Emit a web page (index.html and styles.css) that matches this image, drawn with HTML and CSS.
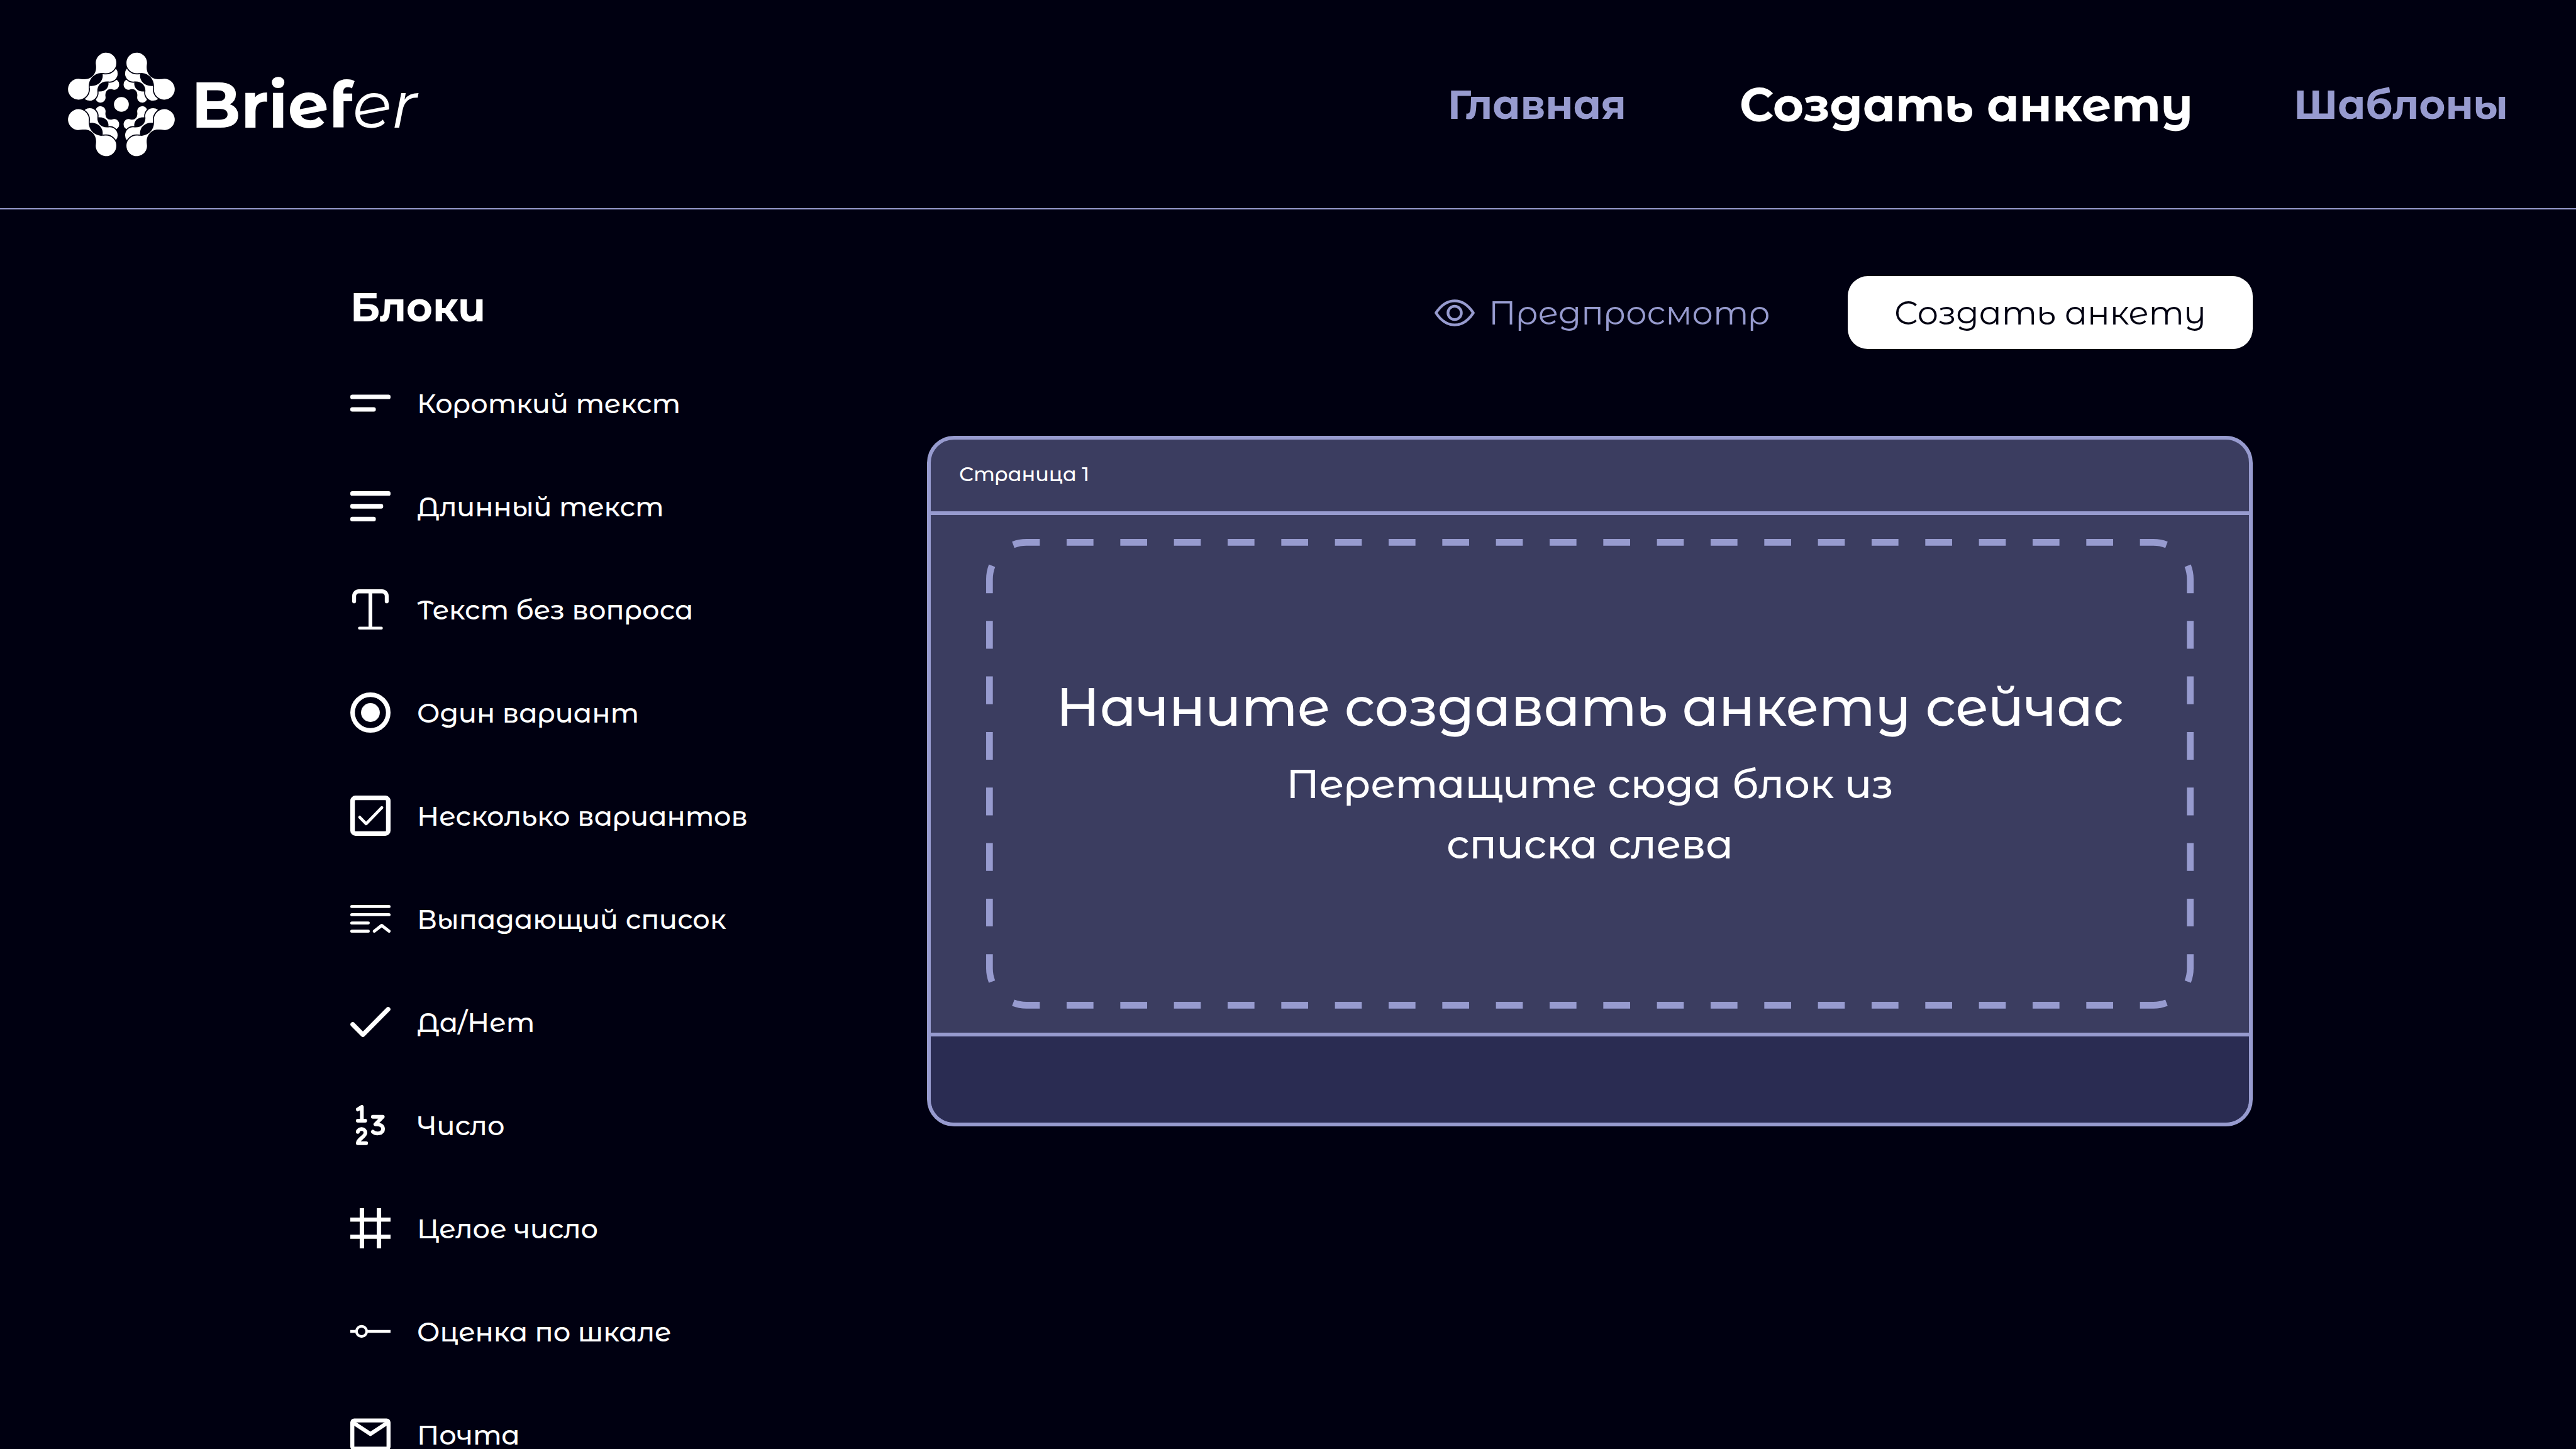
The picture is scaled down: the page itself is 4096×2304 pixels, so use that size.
FILE: index.html
```
<!DOCTYPE html>
<html lang="ru">
<head>
<meta charset="utf-8">
<meta name="viewport" content="width=device-width, initial-scale=1">
<title>Briefer</title>
<link rel="stylesheet" href="styles.css">
</head>
<body>
<header class="header">
  <a class="logo" href="#">
    <svg class="logo-mark" viewBox="38 38 718 698" aria-hidden="true">
      <defs>
        <g id="petal">
          <path d="M382 252A34 34 0 0 0 316 240L310 238C316 275 285 305 242 300L235 315A34 34 0 1 0 291 340C284 300 305 280 335 286A34 34 0 0 0 382 252Z"/>
          <path d="M372 180A53 53 0 0 0 268 165L271 183C278 228 240 270 182 262L150 270A53 53 0 0 0 184 362A53 53 0 0 0 236 300C232 262 262 228 310 233A53 53 0 0 0 372 180Z"/>
          <path d="M363 109A69 69 0 1 0 226 120C232 165 215 190 190 208C165 222 145 218 125 217A70 70 0 1 0 178 275C174 225 205 182 260 176C275 177 285 178 294 178A69 69 0 0 0 363 109Z"/>
        </g>
      </defs>
      <use href="#petal"/>
      <use href="#petal" transform="matrix(-1 0 0 1 794 0)"/>
      <use href="#petal" transform="matrix(1 0 0 -1 0 774)"/>
      <use href="#petal" transform="matrix(-1 0 0 -1 794 774)"/>
      <circle cx="397" cy="387" r="50"/>
    </svg>
    <span class="logo-text">Brief<em>er</em></span>
  </a>
  <nav class="nav">
    <a class="nav-link" href="#">Главная</a>
    <a class="nav-link nav-link-active" href="#" aria-current="page">Создать анкету</a>
    <a class="nav-link" href="#">Шаблоны</a>
  </nav>
</header>

<main class="main">
  <aside class="blocks">
    <h2 class="blocks-title">Блоки</h2>
    <ul class="blocks-list">
      <li><button class="block" type="button">
        <svg class="icon" viewBox="0 0 30 30" aria-hidden="true"><rect y="8.7" width="30" height="3.3" rx="1.5"/><rect y="18" width="19" height="3.3" rx="1.5"/></svg>
        Короткий текст</button></li>
      <li><button class="block" type="button">
        <svg class="icon" viewBox="0 0 30 30" aria-hidden="true"><rect y="3.8" width="30" height="3.4" rx="1.5"/><rect y="13.3" width="24.5" height="3.4" rx="1.5"/><rect y="22.8" width="19" height="3.4" rx="1.5"/></svg>
        Длинный текст</button></li>
      <li><button class="block" type="button">
        <svg class="icon" viewBox="0 0 30 30" aria-hidden="true"><path d="M1.4 9V5A5 5 0 0 1 6.4 0H23.6A5 5 0 0 1 28.6 5V9A1.4 1.4 0 0 1 25.7 9V5.1A2 2 0 0 0 23.7 3.1H16.4V27.9H23.2A1 1 0 0 1 23.2 30H6.8A1 1 0 0 1 6.8 27.9H13.6V3.1H6.3A2 2 0 0 0 4.3 5.1V9A1.4 1.4 0 0 1 1.4 9Z"/></svg>
        Текст без вопроса</button></li>
      <li><button class="block" type="button">
        <svg class="icon icon-line" viewBox="0 0 30 30" aria-hidden="true"><circle cx="15" cy="15" r="13.3" stroke-width="3.4"/><circle class="solid" cx="15" cy="15" r="7"/></svg>
        Один вариант</button></li>
      <li><button class="block" type="button">
        <svg class="icon icon-line" viewBox="0 0 30 30" aria-hidden="true"><rect x="1.7" y="1.7" width="26.6" height="26.6" rx="2.2" stroke-width="3.4"/><path d="M7 16.1L11.8 21L23.5 9" stroke-width="2.2"/></svg>
        Несколько вариантов</button></li>
      <li><button class="block" type="button">
        <svg class="icon icon-line" viewBox="0 0 30 30" aria-hidden="true"><path d="M1.1 5.8H28.9M1.1 11.9H28.9M1.1 18.1H13.4M1.1 24.2H13.4M17.9 24.2L23.4 19.9L28.9 24.2" stroke-width="2.3"/></svg>
        Выпадающий список</button></li>
      <li><button class="block" type="button">
        <svg class="icon icon-line" viewBox="0 0 30 30" aria-hidden="true"><path d="M1.8 16.8L9.4 24.5L28.2 5.5" stroke-width="3.4"/></svg>
        Да/Нет</button></li>
      <li><button class="block" type="button">
        <svg class="icon icon-line" viewBox="0 0 30 30" aria-hidden="true"><path d="M5.6 3.3L8.6 1.4V11.7M5.6 11.7H11.1M5.6 20.1C5.8 17.2 11.3 17 11.3 20.8C11.3 23.6 5.6 25.4 5.6 28.5H11.8M16.8 8.8H24.2L18.7 14.4C22 14.2 24.4 15.4 24.4 17.8C24.4 21.4 19.4 22.2 16.8 19.9" stroke-width="2.8"/></svg>
        Число</button></li>
      <li><button class="block" type="button">
        <svg class="icon" viewBox="0 0 30 30" aria-hidden="true"><path d="M7 0H10.3V30H7ZM19.7 0H23V30H19.7ZM0 7H30V10.1H0ZM0 19.8H30V22.9H0Z"/></svg>
        Целое число</button></li>
      <li><button class="block" type="button">
        <svg class="icon icon-line icon-butt" viewBox="0 0 30 30" aria-hidden="true"><path d="M0 15H4M12.6 15H30" stroke-width="2.1"/><circle cx="8.4" cy="15" r="3.8" stroke-width="1.9"/></svg>
        Оценка по шкале</button></li>
      <li><button class="block" type="button">
        <svg class="icon icon-line" viewBox="0 0 30 30" aria-hidden="true"><rect x="1.5" y="4.5" width="27" height="21" rx="1.5" stroke-width="3"/><path d="M2 6L15 14.6L28 6" stroke-width="3"/></svg>
        Почта</button></li>
    </ul>
  </aside>

  <section class="editor">
    <div class="toolbar">
      <button class="preview" type="button">
        <svg class="eye" viewBox="0 0 30 20" aria-hidden="true"><path d="M1.1 10C5 4 9.6 1 15 1S25 4 28.9 10C25 16 20.4 19 15 19S5 16 1.1 10Z"/><circle cx="15" cy="10" r="5"/></svg>
        Предпросмотр
      </button>
      <button class="create" type="button">Создать анкету</button>
    </div>

    <article class="page">
      <header class="page-head">Страница 1</header>
      <div class="page-body">
        <div class="drop">
          <svg class="drop-frame" viewBox="0 0 900 350" aria-hidden="true">
            <path d="M20.2 4.3A27.5 27.5 0 0 1 30 2.5H870A27.5 27.5 0 0 1 879.8 4.3" stroke-dasharray="20 20"/>
            <path d="M20.2 345.7A27.5 27.5 0 0 0 30 347.5H870A27.5 27.5 0 0 0 879.8 345.7" stroke-dasharray="20 20"/>
            <path d="M4.4 19.9A27.5 27.5 0 0 0 2.5 30V320A27.5 27.5 0 0 0 4.4 330.1" stroke-dasharray="20.7 20.7"/>
            <path d="M895.6 19.9A27.5 27.5 0 0 1 897.5 30V320A27.5 27.5 0 0 1 895.6 330.1" stroke-dasharray="20.7 20.7"/>
          </svg>
          <h1 class="drop-title">Начните создавать анкету сейчас</h1>
          <p class="drop-hint">Перетащите сюда блок из списка слева</p>
        </div>
      </div>
      <footer class="page-foot"></footer>
    </article>
  </section>
</main>
</body>
</html>
```
FILE: styles.css
```
:root {
  --bg: #000011;
  --accent: #979bcf;
  --panel: #3b3d60;
  --panel-dark: #2a2c52;
  --text: #ffffff;
}

* {
  box-sizing: border-box;
}

body {
  display: flex;
  flex-direction: column;
  height: 100vh;
  margin: 0;
  overflow: hidden;
  background: var(--bg);
  color: var(--text);
  font-family: "Montserrat Alternates", Montserrat, Inter, sans-serif;
  font-weight: 500;
}

button {
  padding: 0;
  border: 0;
  background: none;
  color: inherit;
  font: inherit;
  cursor: pointer;
}

a {
  color: inherit;
  text-decoration: none;
}

/* Header */

.header {
  display: flex;
  flex: none;
  align-items: center;
  justify-content: space-between;
  height: 333px;
  padding: 0 108px;
  border-bottom: 2px solid var(--accent);
}

.logo {
  display: flex;
  align-items: center;
  gap: 26px;
}

.logo-mark {
  width: 170px;
  height: 166px;
  fill: var(--text);
}

.logo-mark path {
  stroke: var(--bg);
  stroke-width: 14;
  paint-order: stroke;
}

.logo-text {
  font-size: 103px;
  font-weight: 700;
  line-height: 132px;
}

.logo-text em {
  font-weight: 400;
}

.nav {
  display: flex;
  align-items: center;
  gap: 160px;
}

.nav-link {
  color: var(--accent);
  font-size: 64px;
  font-weight: 700;
}

.nav-link-active {
  margin-left: 20px;
  color: var(--text);
  font-size: 75px;
}

/* Layout */

.main {
  display: grid;
  flex: 1;
  grid-template-columns: 560px minmax(0, 1fr);
  gap: 357px;
  min-height: 0;
  padding: 106px 514px 0 557px;
}

/* Block list */

.blocks-title {
  margin: 0 0 54px;
  font-size: 64px;
  font-weight: 700;
  line-height: 98px;
}

.blocks-list {
  display: flex;
  flex-direction: column;
  gap: 64px;
  margin: 0;
  padding: 0;
  list-style: none;
}

.block {
  display: flex;
  align-items: center;
  gap: 42px;
  height: 100px;
  font-size: 43px;
  white-space: nowrap;
}

.icon {
  flex: none;
  width: 64px;
  height: 64px;
  fill: var(--text);
}

.icon-line {
  fill: none;
  stroke: var(--text);
  stroke-linecap: round;
  stroke-linejoin: round;
}

.icon-line .solid {
  fill: var(--text);
  stroke: none;
}

.icon-butt {
  stroke-linecap: butt;
}

/* Toolbar */

.toolbar {
  display: flex;
  align-items: center;
  justify-content: flex-end;
  gap: 123px;
  margin-bottom: 138px;
}

.preview {
  display: flex;
  align-items: center;
  gap: 22px;
  color: var(--accent);
  font-size: 53px;
  font-weight: 400;
}

.eye {
  width: 64px;
  height: 43px;
  fill: none;
  stroke: var(--accent);
  stroke-width: 2;
  stroke-linejoin: round;
}

.create {
  height: 116px;
  padding: 0 74px;
  border-radius: 32px;
  background: var(--text);
  color: var(--bg);
  font-size: 53px;
  font-weight: 400;
}

/* Survey page */

.page {
  overflow: hidden;
  border: 6px solid var(--accent);
  border-radius: 43px;
  background: var(--panel);
}

.page-head {
  padding: 30px 45px 34px;
  border-bottom: 6px solid var(--accent);
  font-size: 32px;
  line-height: 50px;
}

.page-body {
  padding: 38px 88px;
}

.page-foot {
  height: 143px;
  border-top: 6px solid var(--accent);
  background: var(--panel-dark);
}

.drop {
  position: relative;
  display: flex;
  flex-direction: column;
  align-items: center;
  justify-content: center;
  gap: 10px;
  aspect-ratio: 900 / 350;
  padding-bottom: 10px;
  text-align: center;
}

.drop-frame {
  position: absolute;
  inset: 0;
  width: 100%;
  height: 100%;
  fill: none;
  stroke: var(--accent);
  stroke-width: 5;
}

.drop-title {
  margin: 0;
  font-size: 85px;
  font-weight: 500;
  line-height: 128px;
}

.drop-hint {
  max-width: 1100px;
  margin: 0;
  font-size: 64px;
  line-height: 96px;
}
```
